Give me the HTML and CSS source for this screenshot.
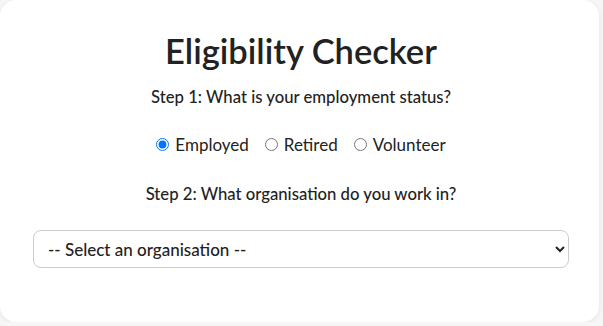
FILE: index.html
```html
<!DOCTYPE html>
<html lang="en">
<head>
<meta charset="utf-8">
<title>Eligibility Checker</title>
<link rel="stylesheet" href="styles.css">
</head>
<body>
<main class="card">
  <h1 class="title">Eligibility Checker</h1>
  <p class="step">Step 1: What is your employment status?</p>
  <div class="radios">
    <label class="radio"><input type="radio" name="status" checked> Employed</label>
    <label class="radio"><input type="radio" name="status"> Retired</label>
    <label class="radio"><input type="radio" name="status"> Volunteer</label>
  </div>
  <p class="step">Step 2: What organisation do you work in?</p>
  <select class="select">
    <option>-- Select an organisation --</option>
  </select>
</main>
</body>
</html>
```
FILE: styles.css
```css
html, body {
  margin: 0;
  padding: 0;
  background: #f6f6f6;
}
body {
  font-family: Lato, "Noto Sans", sans-serif;
  color: #222;
}
.card {
  box-sizing: border-box;
  width: 599px;
  height: 322px;
  background: #fff;
  border-radius: 16px;
  box-shadow: 0 1px 5px rgba(0,0,0,0.08);
  padding: 30px 30px 0 33px;
  display: flex;
  flex-direction: column;
  align-items: center;
}
.title {
  margin: 0;
  font-size: 34.5px;
  font-weight: 600;
  line-height: 42px;
}
.step {
  margin: 14px 0 0 0;
  font-size: 16.7px;
  font-weight: 500;
  line-height: 22px;
}
.radios {
  display: flex;
  gap: 16px;
  margin-top: 26px;
  font-size: 17px;
}
.radio {
  display: flex;
  align-items: center;
  gap: 6px;
}
.radio input {
  margin: 0;
  width: 13px;
  height: 13px;
}
.radios + .step {
  margin-top: 28px;
}
.select {
  align-self: stretch;
  margin-top: 25px;
  height: 38px;
  border: 1px solid #ccc;
  border-radius: 8px;
  background: #fff;
  font-family: inherit;
  font-size: 17px;
  font-weight: 500;
  color: #222;
  padding: 0 10px;
}
```
